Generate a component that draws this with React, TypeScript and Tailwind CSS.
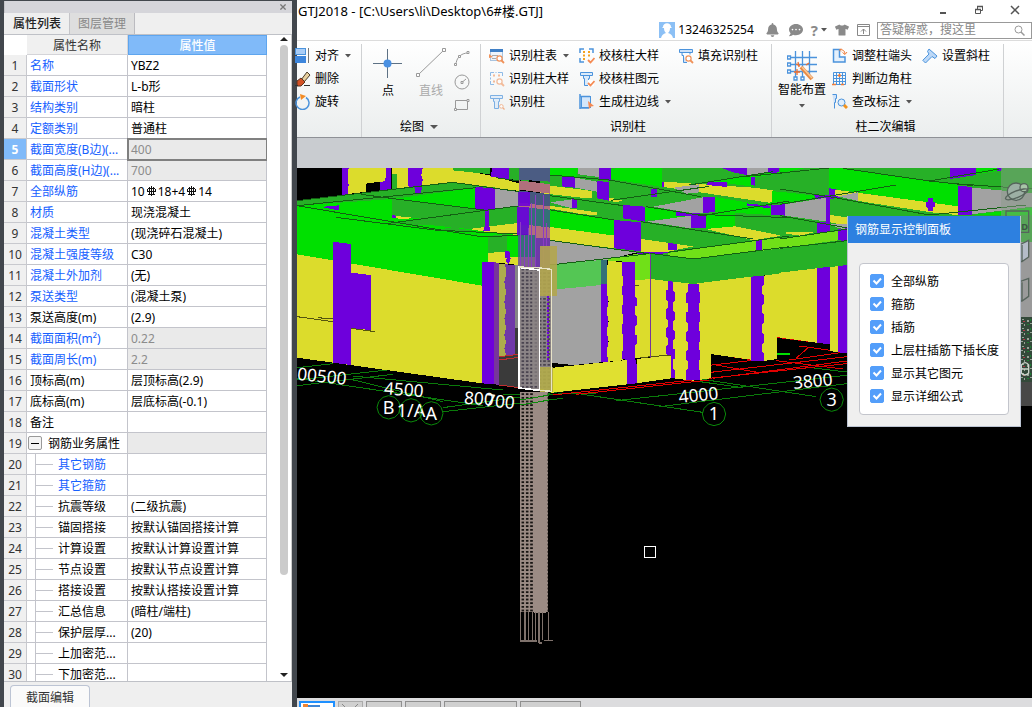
import React, { useState } from "react";
import { FaBell, FaCommentDots, FaTshirt } from "react-icons/fa";

interface PropertyRow {
  name: string;
  value?: React.ReactNode;
  blue?: boolean;
  disabled?: boolean;
  child?: boolean;
  group?: boolean;
  selected?: boolean;
}

// Rebar grade mark used between count and diameter
const Rebar = () => (
  <svg className="mx-px inline h-[11px] w-[11px] align-[-1px]" viewBox="0 0 11 11" fill="none" stroke="#111" shapeRendering="crispEdges">
    <path d="M5.500 0v10M3.500 1v7M7.500 1v7M2 8.500h7M1 5.500h9M2 2.500h7M1.500 3v3M9.500 3v3" />
  </svg>
);

const ROWS: PropertyRow[] = [
  { name: "名称", value: "YBZ2", blue: true },
  { name: "截面形状", value: "L-b形", blue: true },
  { name: "结构类别", value: "暗柱", blue: true },
  { name: "定额类别", value: "普通柱", blue: true },
  { name: "截面宽度(B边)(...", value: "400", blue: true, disabled: true, selected: true },
  { name: "截面高度(H边)(...", value: "700", blue: true, disabled: true },
  { name: "全部纵筋", value: <>10<Rebar />18+4<Rebar />14</>, blue: true },
  { name: "材质", value: "现浇混凝土", blue: true },
  { name: "混凝土类型", value: "(现浇碎石混凝土)", blue: true },
  { name: "混凝土强度等级", value: "C30", blue: true },
  { name: "混凝土外加剂", value: "(无)", blue: true },
  { name: "泵送类型", value: "(混凝土泵)", blue: true },
  { name: "泵送高度(m)", value: "(2.9)" },
  { name: "截面面积(m²)", value: "0.22", blue: true, disabled: true },
  { name: "截面周长(m)", value: "2.2", blue: true, disabled: true },
  { name: "顶标高(m)", value: "层顶标高(2.9)" },
  { name: "底标高(m)", value: "层底标高(-0.1)" },
  { name: "备注" },
  { name: "钢筋业务属性", group: true, disabled: true },
  { name: "其它钢筋", blue: true, child: true },
  { name: "其它箍筋", blue: true, child: true },
  { name: "抗震等级", value: "(二级抗震)", child: true },
  { name: "锚固搭接", value: "按默认锚固搭接计算", child: true },
  { name: "计算设置", value: "按默认计算设置计算", child: true },
  { name: "节点设置", value: "按默认节点设置计算", child: true },
  { name: "搭接设置", value: "按默认搭接设置计算", child: true },
  { name: "汇总信息", value: "(暗柱/端柱)", child: true },
  { name: "保护层厚...", value: "(20)", child: true },
  { name: "上加密范...", child: true },
  { name: "下加密范...", child: true },
];

const Caret = ({ className = "" }: { className?: string }) => (
  <svg className={`h-[4px] w-[6px] shrink-0 ${className}`} viewBox="0 0 6 4">
    <path d="M0 0h6L3 3.500z" fill="#555" />
  </svg>
);

/* ---------- Property panel ---------- */

const PropertyPanel = () => (
  <aside className="flex w-[297px] shrink-0 flex-col border-t border-r-[5px] border-l-4 border-[#42474d] bg-[#efefef]">
    <div className="flex h-3 shrink-0 items-center justify-end border-l border-[#c4c4c8] bg-[#d5d5da] pr-1.5">
      <button aria-label="关闭面板">
        <svg className="h-[6px] w-[6px]" viewBox="0 0 7 7" stroke="#777" strokeWidth="1.500">
          <path d="M.5 .5l6 6M6.500 .5l-6 6" />
        </svg>
      </button>
    </div>
    <div className="flex h-[22px] shrink-0 border-b border-[#bfc1c7] pl-px">
      <button className="w-[65px] border-r border-[#c4c4c8] font-medium text-[#222]">属性列表</button>
      <button className="w-[65px] border-r border-[#bbbbc0] bg-[#dedede] text-[#888]">图层管理</button>
    </div>

    <div className="flex min-h-0 flex-1 border-b border-[#bfc1c7] bg-white">
      <div className="min-w-0 flex-1 overflow-hidden">
        <table className="w-full table-fixed border-separate border-spacing-0">
          <thead>
            <tr>
              <th className="h-5 w-[23px] border-r border-white bg-white p-0" />
              <th className="w-[101px] border-r border-b border-[#d4d4d8] bg-[#f0f0f0] p-0 pt-0.5 leading-3 font-normal text-[#333]">
                属性名称
              </th>
              <th className="border border-[#5ea5ee] bg-[#80baf9] p-0 pt-0.5 leading-3 font-medium text-white">属性值</th>
            </tr>
          </thead>
          <tbody>
            {ROWS.map((row, i) => (
              <tr key={row.name}>
                <td
                  className={`h-[21px] border-r border-b border-[#c8c9ce] p-0 pt-0.5 text-center leading-3 ${
                    row.selected ? "bg-[#80baf9] font-bold text-white" : "bg-[#f0f0f0] text-[#333]"
                  }`}
                >
                  {i + 1}
                </td>
                <td className="border-r border-b border-[#c3c4cb] p-0 leading-3 whitespace-nowrap">
                  <div className={`flex h-5 items-center ${row.blue ? "text-[#1560ff]" : "text-black"}`}>
                    {row.child && (
                      <>
                        <span className="ml-2 h-5 w-px bg-[#c3c4cb]" />
                        <span className="mr-[5px] h-px w-[17px] bg-[#c3c4cb]" />
                      </>
                    )}
                    {row.group && (
                      <button aria-label="折叠" className="mr-1.5 ml-px flex h-[14px] w-[14px] items-center justify-center rounded-[2px] border border-[#999] bg-[#f4f4f4]">
                        <span className="h-px w-2 bg-black" />
                      </button>
                    )}
                    <span className={row.child || row.group ? "pt-0.5" : "pt-0.5 pl-[3px]"}>{row.name}</span>
                  </div>
                </td>
                <td
                  className={`border-r border-b border-[#c3c4cb] p-0 pt-0.5 pl-[3px] leading-3 whitespace-nowrap ${
                    row.disabled ? "bg-[#eaeaea] text-[#8c8c8c]" : "text-black"
                  } ${row.selected ? "outline-2 -outline-offset-1 outline-[#808080]" : ""}`}
                >
                  {row.value}
                </td>
              </tr>
            ))}
          </tbody>
        </table>
      </div>
      <div className="flex w-[25px] shrink-0 flex-col items-center gap-1 border-r border-[#ccc] pt-0.5 pb-1 pl-2.5">
        <svg className="h-[4px] w-2 shrink-0" viewBox="0 0 8 4"><path d="M0 4h8L4 0z" fill="#222" /></svg>
        <div className="flex min-h-0 w-2 flex-1 flex-col">
          <div className="h-[85%] rounded-full bg-[#cbcbcb]" />
        </div>
        <svg className="h-[4px] w-2 shrink-0" viewBox="0 0 8 4"><path d="M0 0h8L4 4z" fill="#222" /></svg>
      </div>
    </div>

    <div className="flex h-[25px] shrink-0 items-end pl-1.5">
      <button className="h-[22px] w-20 rounded-t-sm border border-b-0 border-[#bcc4d4] bg-[#fafafa] pt-0.5 text-[#333]">
        截面编辑
      </button>
    </div>
  </aside>
);

/* ---------- Ribbon icons ---------- */

const Icon = ({ children }: { children: React.ReactNode }) => (
  <svg className="h-4 w-4 shrink-0" viewBox="0 0 16 16" fill="none" stroke="#4b93dc">
    {children}
  </svg>
);

const lens = (
  <g stroke="#f0925a" strokeWidth="1.200">
    <circle cx="10.500" cy="10.500" r="2.600" fill="#fff" />
    <path d="M12.500 12.500l2.500 2.500" strokeWidth="1.800" />
  </g>
);
const check = <path d="M9 12l2.500 2.500L15.500 10" stroke="#f58a52" strokeWidth="1.800" />;
const columnShape = <path d="M1.500 1.500h12v3h-12zM4.500 4.500v3h1v7h4v-7h1v-3" fill="#dcebfa" />;

const icons = {
  align: <><rect x=".5" y=".5" width="10" height="6" fill="#a9cdf7" /><rect x="0" y="8" width="11" height="7" fill="#3e86dc" stroke="none" /><path d="M13.500 0v15" stroke="#777" /></>,
  erase: <><path d="M6 9L12 1l3 3-6 7z" fill="#e6cf9f" stroke="#4a3b28" /><path d="M2 10l4-3 4 4-4 4H2z" fill="#d45327" stroke="#5a3320" /><path d="M0 14.500h3M9 14.500h6" stroke="#333" /></>,
  rotate: <><path d="M5 3a6.500 6.500 0 1 0 6 .5" strokeWidth="1.500" /><path d="M5 0l6 2-5 4z" fill="#f28b25" stroke="none" /></>,
  tableFind: <><rect x="1.500" y="1.500" width="12" height="11" fill="#eef4fb" stroke="#aac4df" /><path d="M1 2.500h13" strokeWidth="3" stroke="#3f7fc6" /><path d="M3 7.500h6M3 10.500h4" stroke="#aaa" /><path d="M0 6l4 3-4 1z" fill="#f0925a" stroke="none" />{lens}</>,
  detailFind: <g opacity=".6"><path d="M5 1.500H1.500V5M9 1.500h4.500V5M5 13.500H1.500V10M1.500 6.500v2M6.500 1.500h1" /><path d="M4 4.500h2M9 4.500h2M4 10.500h2" stroke="#f0925a" strokeWidth="2" />{lens}</g>,
  column: <g opacity=".7">{columnShape}<g transform="translate(5 5) scale(.7)">{lens}</g></g>,
  checkDetail: <><path d="M5 1H1v4M10 1h4v4M5 14H1v-4" strokeWidth="1.500" /><path d="M4 4h2M9 4h2M4 7.500h2M4 11h2M9 7.500h2" stroke="#f5a11f" strokeWidth="2" />{check}</>,
  checkElement: <>{columnShape}<path d="M9 9h6v6H9z" fill="#fff" stroke="none" />{check}</>,
  edge: <><rect x="2.500" y="2.500" width="9" height="11" fill="#d3e6fa" /><path d="M1 0v15M1 14h9M1 2.500h10" strokeWidth="1.500" /><path d="M9 7l6 5-3 .5L10 15z" fill="#f58a52" stroke="none" /></>,
  fill: <><path d="M1.500 1.500h13v3h-13zM4 4.500v3h1.500v7H9M12 4.500v2" fill="#cfe2f8" />{lens}</>,
  adjust: <><path d="M7.500 1.500h-6v12.500h11.500v-5h-5.500z" fill="#e5f0fc" strokeWidth="1.500" /><path d="M8 1.500c3 0 5 1.500 5 4.500M10.500 4.500l2.500 2 2-2.500M9 .5L7.500 2 9 3.500" stroke="#ef7d3a" /></>,
  judge: <><path d="M1.500 1.500h12v12h-12zM1.500 4.500h12M1.500 7.500h12M1.500 10.500h12M4.500 1.500v12M7.500 1.500v12M10.500 1.500v12" /><path d="M6 4.500h3M7.500 3v3M0 13.500h4M9 13.500h3" stroke="#ef7d3a" strokeWidth="1.500" /></>,
  note: <><path d="M.5 .5h4v4h-1v4h-1v6" fill="#cfe2f8" /><circle cx="9.500" cy="8.500" r="3.500" fill="#dfeefd" /><path d="M12 11l3 3" stroke="#f2931e" strokeWidth="3" /></>,
  slant: <><path d="M7 1l8 7-2 2.500-3-2L3.500 15 .8 12.300 7 6 5.500 3.500z" fill="#bcd8f7" /></>,
};

interface ToolProps {
  icon: React.ReactNode;
  label: string;
  menu?: boolean;
}

const Tool = ({ icon, label, menu }: ToolProps) => (
  <button className="flex h-[23px] items-center gap-1 whitespace-nowrap">
    <Icon>{icon}</Icon>
    <span>{label}</span>
    {menu && <Caret className="ml-0.5" />}
  </button>
);

const GroupLabel = ({ children }: { children: React.ReactNode }) => (
  <div className="mt-auto flex h-5 items-center justify-center gap-1.5 pr-1">{children}</div>
);

const Ribbon = () => (
  <div className="flex h-[98px] shrink-0 border-t border-b border-t-[#dcdcdc] border-b-[#8e9196] bg-linear-to-b from-white to-[#ebeeee] pt-[3px]">
    <section className="-ml-0.5 flex w-[67px] shrink-0 flex-col border-r border-[#cfd1d3]">
      <Tool icon={icons.align} label="对齐" menu />
      <Tool icon={icons.erase} label="删除" />
      <Tool icon={icons.rotate} label="旋转" />
    </section>

    <section className="flex w-[119px] shrink-0 flex-col border-r border-[#cfd1d3]">
      <div className="flex pt-[3px]">
        <button className="flex w-[52px] flex-col items-center gap-1">
          <svg className="h-[32px] w-[30px]" viewBox="0 0 30 32" stroke="#5d7184">
            <path d="M14.500 2v29M0 16.500h29" />
            <circle cx="14.500" cy="16.500" r="4" fill="#4a90e2" stroke="none" />
          </svg>
          <span className="leading-4">点</span>
        </button>
        <button className="flex w-[34px] flex-col items-center gap-1 text-[#aaa]" disabled>
          <svg className="h-[32px] w-[30px]" viewBox="0 0 30 32" fill="#fff" stroke="#999">
            <path d="M2 28L28 3" />
            <path d="M.5 26.500h3v3h-3zM26.500 1.500h3v3h-3z" />
          </svg>
          <span className="leading-4">直线</span>
        </button>
        <div className="flex flex-1 flex-col items-center pr-1">
          <button aria-label="弧" className="h-[23px]" disabled>
            <svg className="h-4 w-4" viewBox="0 0 16 16" fill="#fff" stroke="#999">
              <path d="M2 14C2 7 7 2 14 2" fill="none" />
              <path d="M.5 12.500h2v2h-2zM4.500 4.500h2v2h-2zM13 .5h2v2h-2z" />
            </svg>
          </button>
          <button aria-label="圆" className="h-[23px]" disabled>
            <svg className="h-4 w-4" viewBox="0 0 16 16" fill="none" stroke="#999">
              <circle cx="8" cy="8" r="7" />
              <path d="M7 7.500h2v2H7zM9 7.500L12 5" />
            </svg>
          </button>
          <button aria-label="矩形" className="h-[23px]" disabled>
            <svg className="h-4 w-4" viewBox="0 0 16 16" fill="#fff" stroke="#999">
              <path d="M1.500 3.500h12v9h-12z" fill="none" />
              <path d="M.5 11.500h2v2h-2zM13 2.500h2v2h-2z" />
            </svg>
          </button>
        </div>
      </div>
      <GroupLabel>
        绘图
        <svg className="h-[4px] w-2" viewBox="0 0 8 4"><path d="M0 0h8L4 4z" fill="#555" /></svg>
      </GroupLabel>
    </section>

    <section className="flex w-[291px] shrink-0 flex-col border-r border-[#cfd1d3] pl-2">
      <div className="flex">
        <div className="w-[90px] shrink-0">
          <Tool icon={icons.tableFind} label="识别柱表" menu />
          <Tool icon={icons.detailFind} label="识别柱大样" />
          <Tool icon={icons.column} label="识别柱" />
        </div>
        <div className="w-[99px] shrink-0">
          <Tool icon={icons.checkDetail} label="校核柱大样" />
          <Tool icon={icons.checkElement} label="校核柱图元" />
          <Tool icon={icons.edge} label="生成柱边线" menu />
        </div>
        <div>
          <Tool icon={icons.fill} label="填充识别柱" />
        </div>
      </div>
      <GroupLabel>识别柱</GroupLabel>
    </section>

    <section className="flex w-[232px] shrink-0 flex-col border-r border-[#cfd1d3]">
      <div className="flex">
        <button className="flex w-[60px] shrink-0 flex-col items-center pt-1.5">
          <svg className="h-[32px] w-[30px]" viewBox="0 0 30 32" fill="#fff" stroke="#4b93dc" strokeWidth="1.300">
            <path d="M2 7.500h28M2 14.500h28M2 21.500h28M8.500 1v26M15.500 1v26M22.500 1v26" />
            <path d="M.5 6h3v3h-3zM.5 13h3v3h-3zM.5 20h3v3h-3zM7 27h3v3H7zM14 27h3v3h-3z" />
            <path d="M14 17l11 12" stroke="#e98b45" strokeWidth="4" />
            <path d="M15 17l10 11" stroke="#f7c99a" strokeWidth="1.500" />
            <path d="M9 14l4 2M11 12l1 5M19 15l3-2M7 22h6M10 19v6" stroke="#ef7030" />
          </svg>
          <span className="leading-4">智能布置</span>
          <Caret className="mt-1.5" />
        </button>
        <div className="w-[90px] shrink-0">
          <Tool icon={icons.adjust} label="调整柱端头" />
          <Tool icon={icons.judge} label="判断边角柱" />
          <Tool icon={icons.note} label="查改标注" menu />
        </div>
        <div>
          <Tool icon={icons.slant} label="设置斜柱" />
        </div>
      </div>
      <GroupLabel>柱二次编辑</GroupLabel>
    </section>
  </div>
);

/* ---------- Title bar ---------- */

const TitleBar = () => (
  <header className="shrink-0 bg-white">
    <div className="flex h-5 items-center justify-between pr-3 pl-px">
      <h1 className="pt-0.5 text-[13px] whitespace-nowrap">GTJ2018 - [C:\Users\li\Desktop\6#楼.GTJ]</h1>
      <div className="flex items-center gap-[26px]">
        <button aria-label="最小化">
          <svg className="h-[10px] w-[10px]" viewBox="0 0 10 10"><path d="M2 7h6v2H2z" fill="#555" /></svg>
        </button>
        <button aria-label="还原">
          <svg className="h-[10px] w-[10px]" viewBox="0 0 10 10" fill="#fff" stroke="#555">
            <path d="M3.500 1.500h5v4h-5z" /><path d="M1.500 4.500h5v4h-5z" /><path d="M3 1.500h6M1 4.500h6" strokeWidth="1.500" />
          </svg>
        </button>
        <button aria-label="关闭">
          <svg className="h-[10px] w-[10px]" viewBox="0 0 10 10" stroke="#555" strokeWidth="1.500"><path d="M1 1l8 8M9 1l-8 8" /></svg>
        </button>
      </div>
    </div>
    <div className="flex h-5 items-center justify-end">
      <svg className="mr-[3px] h-4 w-4" viewBox="0 0 16 16">
        <rect width="16" height="16" fill="#8cc0f5" />
        <path d="M4 5c0-5 8-5 8 0l1 1H3zM5 6h6c0 3-1 4-2 5 3 1 4 2 5 5H2c1-3 2-4 5-5-1-1-2-2-2-5z" fill="#fff" />
      </svg>
      <span className="mr-3">13246325254</span>
      <div className="flex items-center text-[#8a8a8a]">
        <button aria-label="通知" className="mr-2.5"><FaBell className="h-[14px] w-[13px]" /></button>
        <button aria-label="消息" className="mr-2"><FaCommentDots className="h-[14px] w-[14px]" /></button>
        <button aria-label="帮助" className="mr-2 flex items-center gap-[3px] text-[15px] leading-4 font-bold">?<Caret /></button>
        <button aria-label="皮肤" className="mr-2"><FaTshirt className="h-[14px] w-[14px]" /></button>
        <button aria-label="收起功能区" className="mr-[7px]">
          <svg className="h-[12px] w-[13px]" viewBox="0 0 13 12" fill="none" stroke="#888">
            <path d="M.5 .5h12v11H.5zM.5 2.500h12M6.500 10V5M4 7.500L6.500 5 9 7.500" />
          </svg>
        </button>
      </div>
      <label className="flex h-[17px] w-[155px] items-center border border-[#999] bg-white pr-1.5 pl-0.5">
        <input aria-label="搜索" placeholder="答疑解惑，搜这里" className="min-w-0 flex-1 leading-4 outline-none placeholder:text-[#888]" />
        <svg className="h-[11px] w-[11px]" viewBox="0 0 11 11" fill="none" stroke="#999">
          <circle cx="4.500" cy="4.500" r="3.500" /><path d="M7 7l3.500 3.500" strokeWidth="1.500" />
        </svg>
      </label>
    </div>
  </header>
);

/* ---------- 3D model ---------- */

const G = "#00e000";
const D = "#27b027";
const L = "#70e018";
const Y = "#dcdc2c";
const P = "#6e00dc";
const S = "#a2a2a2";

type Face = [string, string];

const LEFT_FACES: Face[] = [
  [Y, "155,9 270,9 270,50 252,75 155,87"],
  [P, "137,9 158,9 155,40 158,60 155,88 137,90"],
  ["#000", "210,56 252,50 252,75 210,83"],
  [P, "270,9 285,9 285,77 252,80 252,52 268,48"],
  [Y, "287,9 337,9 340,66 302,70 302,28 287,28"],
  [D, "287,28 302,28 302,72 287,74"],
  [Y, "375,9 470,9 575,30 670,55 670,78 470,52 375,66"],
  [D, "470,9 583,9 583,28 470,16"],
  [P, "588,9 640,9 640,42 585,36"],
  [D, "640,9 700,9 700,50 640,42"],
  [G, "3,120 540,68 700,85 700,302 576,290 558,362 3,268"],
  [D, "3,107 470,52 600,68 540,68 290,102 3,122"],
  [P, "337,9 380,9 376,30 380,45 375,88 358,88 358,68 337,64"],
  [P, "75,126 128,121 128,136"],
  [D, "287,102 568,137 385,162 287,152"],
  [Y, "300,153 350,158 330,163 300,160"],
  [P, "288,150 300,152 300,160 288,158"],
  [P, "538,66 598,70 598,132 568,136 538,130"],
  [S, "598,70 667,80 667,122 598,131"],
  [D, "270,176 665,123 665,176 520,192 400,180"],
  [Y, "520,192 665,174 665,210 585,203"],
  [D, "415,195 470,187 545,200 500,205"],
  [P, "567,136 579,136 579,182 584,198 562,198 567,180"],
  [G, "415,196 560,215 700,205 632,208"],
  [D, "576,213 632,207 632,260 576,265"],
  [Y, "576,264 627,260 640,275 668,275 668,300 576,290"],
  [P, "627,258 641,260 641,276 645,280 637,298 630,290 632,280 627,278"],
  [Y, "3,268 558,362 558,655 3,578"],
  [P, "110,230 165,237 165,600 110,593"],
  [P, "165,323 224,330 224,495 165,490"],
  [P, "558,292 595,292 595,658 558,655"],
  ["#77369a", "595,292 610,294 610,660 595,658"],
  ["#adad4c", "610,296 632,298 632,572 610,575"],
  ["#7038a8", "628,298 660,300 660,570 630,572 625,550 630,530 625,510 630,490 625,460 630,440 625,410 630,380 625,350 630,330"],
  ["#3a3a3a", "610,575 668,568 668,668 610,660"],
  ["#858585", "658,300 668,302 668,490 658,490"],
  ["#3a3a3a", "658,490 668,490 668,570 658,570"],
];

const MID_FACES: Face[] = [
  [D, "0,9 750,9 750,230 460,282 0,230"],
  [G, "30,9 115,9 110,36 30,30"],
  [S, "115,9 177,9 177,36 115,28"],
  [P, "65,32 105,38 105,68 65,64"],
  [S, "105,38 172,50 172,80 105,68"],
  [P, "177,9 212,9 212,47 177,45"],
  [P, "172,47 207,52 207,107 172,100"],
  [G, "212,12 240,9 367,9 367,66 212,42"],
  [Y, "0,58 157,78 157,98 125,98 0,84"],
  [P, "333,72 350,72 350,95 333,95"],
  [P, "365,50 372,50 372,66 365,66"],
  [P, "545,9 620,9 620,30 580,22"],
  [S, "620,9 685,9 685,22 620,30"],
  [P, "685,9 718,9 718,22 685,24"],
  [G, "520,50 690,24 750,20 640,38 640,65 560,55"],
  [P, "633,36 645,36 645,62 633,60"],
  [Y, "372,50 640,68 700,76 700,115 480,82 372,66"],
  [P, "500,50 560,50 560,66 500,60"],
  [S, "400,68 478,58 478,82 440,86"],
  [G, "697,78 750,86 750,115 680,116 697,110"],
  [S, "30,112 97,103 95,130"],
  [P, "95,102 112,103 110,130 95,130"],
  [Y, "0,118 170,142 170,150 130,148 0,126"],
  [Y, "207,98 250,105 230,112 207,107"],
  [P, "250,120 315,125 315,170 248,160"],
  [G, "315,127 485,150 400,160 315,167"],
  [S, "340,125 488,97 488,145 440,142"],
  [P, "488,95 525,97 525,140 488,145"],
  [G, "525,96 695,124 695,150 525,140"],
  [P, "620,115 690,122 692,130 620,122"],
  [P, "692,120 735,118 735,152 692,150"],
  [S, "735,117 750,115 750,156 735,152"],
  [P, "408,142 490,146 453,155 408,152"],
  [S, "320,170 453,152 453,190"],
  [P, "453,150 497,148 497,190 453,190"],
  [G, "497,148 585,136 585,186 497,192"],
  [Y, "497,192 585,184 725,212 640,226"],
  [G, "0,130 225,165 225,212 0,182"],
  [Y, "0,182 225,212 225,250 0,222"],
  [P, "222,165 303,172 303,259 222,250"],
  [Y, "303,222 460,244 370,263 303,262"],
  [P, "383,233 410,237 410,256 383,256"],
  [S, "0,223 290,262 200,285 0,303"],
  [P, "290,260 385,262 350,270 290,266"],
  [L, "383,264 650,227 750,212 750,247 460,282 383,272"],
  [P, "648,228 666,225 666,257 648,259"],
  [L, "205,280 290,267 332,266 332,342 285,346 285,292 205,287"],
  [D, "332,265 460,282 750,247 750,322 460,357 332,342"],
  ["#54c654", "30,300 183,285 183,360 30,378"],
  [S, "0,378 183,360 183,592 100,600 0,590"],
  ["#357078", "183,285 200,285 200,357 183,360"],
  [P, "183,358 204,355 204,592 183,592"],
  [Y, "203,287 250,292 250,586 205,590 200,560 206,530 200,500 206,470 200,440 206,410 200,380"],
  [Y, "285,346 332,342 460,357 512,350 512,640 460,647 400,640 400,585 390,570 285,580"],
  [P, "246,290 285,292 285,395 290,398 290,422 285,425 285,450 290,453 290,480 285,483 285,508 290,511 290,538 285,541 285,580 290,600 290,655 262,658 262,585 246,582 246,560 250,555 250,510 246,506 246,480 250,476 250,450 246,446 246,422 250,418 250,393 246,390 246,365 250,362 250,335 246,332"],
  ["#e0e030", "0,612 262,585 262,658 38,683 0,680"],
  ["#e0e030", "290,582 393,570 393,640 290,655"],
  [P, "384,348 399,350 399,378 404,382 404,408 399,411 399,436 404,440 404,466 399,470 399,495 404,499 404,522 399,526 399,550 404,553 404,582 395,582 390,570 378,568 378,545 383,540 383,520 378,515 378,490 383,485 383,465 378,460 378,434 383,430 383,408 378,404 378,377 384,374"],
  [P, "394,583 399,583 399,612 404,615 404,640 394,640"],
  [P, "443,357 477,357 477,380 481,384 481,412 477,415 477,440 481,443 481,470 477,474 477,498 481,502 481,528 477,532 477,555 481,558 481,584 477,588 477,615 481,618 481,645 438,645 438,615 443,612 443,588 438,584 438,558 443,555 443,532 438,528 438,502 443,498 443,474 438,470 438,443 443,440 443,415 438,412 438,384 443,380"],
  [Y, "512,350 632,335 632,584 512,567"],
  [P, "632,335 672,332 672,358 667,362 667,388 672,392 672,416 667,420 667,445 672,450 672,474 667,478 667,504 672,508 672,532 667,536 667,560 672,564 672,588 632,588"],
  [Y, "672,332 712,326 712,582 672,588 672,564 667,560 667,536 672,532 672,508 667,504 667,478 672,474 672,450 667,445 667,420 672,416 672,392 667,388 667,362 672,358"],
  [Y, "712,326 750,322 750,522 712,515"],
];

const RIGHT_FACES: Face[] = [
  [D, "0,9 756,9 756,230 202,230 0,250"],
  [G, "0,9 75,9 0,24"],
  [G, "0,80 105,92 105,102 0,118"],
  [P, "0,118 15,118 15,152 0,150"],
  [P, "103,90 180,92 180,100 105,102"],
  [S, "15,118 140,98 140,170 15,152"],
  [P, "138,98 150,98 150,175 138,172"],
  [G, "148,9 190,9 450,47 535,60 535,125 148,70"],
  [P, "147,70 168,72 165,95 147,92"],
  [Y, "165,74 535,124 535,150 480,146 235,108 165,92"],
  [S, "172,94 235,82 235,108"],
  [P, "443,98 458,98 458,110 465,112 465,126 458,128 458,138 443,138 443,128 438,126 438,112 443,110"],
  [P, "510,9 588,9 588,30 510,42"],
  [G, "588,9 655,9 650,18 588,28"],
  [P, "652,9 665,9 665,16 652,18"],
  [D, "190,9 510,9 510,40 450,48"],
  [P, "535,62 575,66 575,150 535,150"],
  [S, "575,68 756,85 756,125 575,148"],
  [G, "575,150 756,128 756,150"],
  [Y, "150,150 202,157 202,182 150,172"],
  [S, "150,178 202,178 202,192 175,190"],
  [Y, "0,203 110,200 60,212"],
  [P, "110,170 150,172 150,200 110,205"],
  [L, "0,222 175,198 175,226 0,250"],
  [P, "175,192 202,190 202,228 175,226"],
  [D, "0,252 202,227 202,300 0,324"],
  [Y, "0,323 110,310 110,533 0,518"],
  [P, "110,308 150,307 150,538 110,533"],
  [Y, "150,307 175,303 175,562 150,558"],
  [P, "175,303 202,300 202,565 175,562"],
];

const Faces = ({ list }: { list: Face[] }) => (
  <>
    {list.map(([fill, points], i) => (
      <polygon key={i} fill={fill} points={points} />
    ))}
  </>
);

// Axis bubbles are drawn by the engine as low-poly circles
const AxisBubble = ({ x, y, label }: { x: number; y: number; label: string }) => {
  const points = Array.from({ length: 12 }, (_, i) => {
    const a = (i * Math.PI) / 6;
    return `${Math.round(x + 35 * Math.cos(a))},${Math.round(y + 35 * Math.sin(a))}`;
  }).join(" ");

  return (
    <g>
      <polygon points={points} fill="none" stroke="#0a8a0a" strokeWidth="3" />
      <text x={x} y={y + 19} textAnchor="middle" fontSize="54">{label}</text>
    </g>
  );
};

const Model = () => (
  <svg className="block h-full w-full" viewBox="3 9 2205 1590" preserveAspectRatio="xMinYMin slice" shapeRendering="crispEdges" fontFamily="'Noto Sans', sans-serif">
    <defs>
      <pattern id="mesh" x="674" width="13" height="11" patternUnits="userSpaceOnUse">
        <rect width="13" height="11" fill="#9b8b84" />
        <rect x="2" y="3" width="9" height="4" fill="#171412" />
      </pattern>
      <pattern id="meshDim" x="674" width="13" height="11" patternUnits="userSpaceOnUse">
        <rect width="13" height="11" fill="#8b8486" />
        <rect x="2" y="3" width="9" height="4" fill="#4a4450" />
      </pattern>
      <pattern id="foliage" width="30" height="27" patternUnits="userSpaceOnUse">
        <rect width="30" height="27" fill="#33493a" />
        <path d="M3 6h6v6H3zM18 3h6v3h-6zM12 15h9v3h-9zM24 18h3v6h-3z" fill="#98a498" />
        <path d="M12 3h3v6h-3zM3 18h6v3H3z" fill="#1a8030" />
        <path d="M21 9h6v3h-6z" fill="#b03848" />
      </pattern>
    </defs>
    <rect x="0" y="0" width="2300" height="1700" fill="#000" />

    {/* Axis grid behind the building */}
    <g stroke="#0a7a0a" strokeWidth="3" fill="none">
      <path d="M3 608L110 596M3 645L300 612M3 662L290 628M170 633L620 675M160 642L440 710M3 640L560 722M440 728L900 665M440 740L800 700M620 690L900 685" />
      <path d="M840 685L1220 742M1090 725L1660 655M960 707L1480 650M1200 640L1560 695M1212 650L1340 668M1520 605L1660 622M1480 650L1660 630" />
    </g>
    <g stroke="#e00000" strokeWidth="3">
      <path d="M770 690L1660 595M840 688L1240 645M1244 565L1372 585M1250 640L1653 588M1244 622L1653 575M1232 602L1440 578M1260 600L1390 623M1440 587L1640 612M1444 517L1545 530M1510 543L1653 563M1480 585L1653 560M1540 545L1500 580" />
    </g>
    <path d="M1444 568L1482 566" stroke={G} strokeWidth="5" />

    <Faces list={LEFT_FACES} />
    <g transform="translate(732 0)"><Faces list={MID_FACES} /></g>
    <g transform="translate(1452 0)"><Faces list={RIGHT_FACES} /></g>

    {/* Beam edges */}
    <g stroke="#136013" strokeWidth="3" fill="none">
      <path d="M3 107L470 52L670 80M3 122L560 216L717 208M195 88L285 100L565 135M120 157L415 195L665 207M3 122L540 68M270 176L665 123M600 38L670 48" />
      <path d="M732 130L955 165M732 88L982 122M762 30L940 45L1215 95M944 106L1240 64M1035 170L1372 222M1050 125L1220 152L1480 108M1062 265L1192 282L1480 245M1115 262L1480 213M1200 148L1480 158M1180 60L1430 20M1340 35L1480 22M732 222L1050 265M762 300L1060 266" />
      <path d="M1452 24L1600 9M1452 72L1600 95M1452 118L1800 60M1452 152L1660 190M1640 10L1900 48L2030 62M1900 48L2110 12M1600 95L1900 150M1900 150L2190 120M1452 250L1654 227M1452 222L1654 192M1960 55L2208 72" />
    </g>
    <g stroke="#55550f" strokeWidth="3" fill="none">
      <path d="M3 455L110 470M65 458L110 462M165 490L238 500M1032 578L1125 570M1018 362h12" />
      <path d="M1063 266V578" stroke="#77369a" />
      <path d="M610 575L668 568M610 585L668 577M610 660L668 668" stroke="#c03030" />
    </g>

    {/* Highlighted column */}
    <g>
      <path d="M669 9h94v41l-94-6z" fill="#4b5c83" />
      <path d="M669 46l94 12v28l-94-12z" fill="#b0707c" />
      <path d="M669 76l94 12v46l-94-8z" fill="#45587e" />
      <path d="M665 122l98 12v56l-98-12z" fill="#357078" />
      <path d="M669 112l94 12v10l-94-8z" fill="#b0707c" />
      <path d="M700 180l63 8v37l-63-8z" fill="#b0707c" />
      <path d="M665 210h52v70h-52z" fill="#357078" />
      <path d="M665 275h52v34h-52z" fill="#7a6288" />
      <path d="M717 220h46v90h-46z" fill="#6d3aa8" />
      <path d="M667 80h34v42h-34zM663 125h37v86h-37z" fill={P} opacity=".9" />
      <path d="M673 170v132M685 210v95M696 190v120M706 115v190M718 90v215M742 90v215M750 175v70" stroke="#8d3bc4" strokeWidth="3" />
      <path d="M668 305l98 8v362l-98-7z" fill="url(#meshDim)" />
      <path d="M732 243h50v149h-50z" fill="#b3a64e" opacity=".9" />
      <path d="M732 607h38v73h-38z" fill="#b3ac4a" opacity=".9" />
      <path d="M708 320h20v340h-20z" fill="#8b8484" opacity=".7" />
      <path d="M756 392v195" stroke={P} strokeWidth="5" strokeDasharray="6 5" />
      <path d="M668 307l62 8v361l-62-7z" stroke="#fff" strokeWidth="5" fill="none" />
      <path d="M670 306l56 2 40 5v366l-36-3" stroke="#e8e4c8" strokeWidth="4" fill="none" />
    </g>

    {/* Rebar cage under the slab */}
    <rect x="673" y="681" width="84" height="660" fill="url(#mesh)" />
    <rect x="713" y="681" width="36" height="664" fill="#9b8b84" />
    <path d="M674 1341v87M687 1341v87M698 1341v84M709 1341v87M718 1341v84M729 1341v94M740 1341v84M757 1341v87M672 1428h50M728 1434h10M744 1426h26" stroke="#7f726c" strokeWidth="4" fill="none" />
    <path d="M673 720L760 705M673 705L760 690" stroke="#0a8a0a" strokeWidth="3" />

    <g fill="#fff" fontSize="52" shapeRendering="auto">
      <text x="2" y="644" transform="rotate(6 2 644)">00500</text>
      <text x="263" y="688" transform="rotate(4 263 688)">4500</text>
      <text x="503" y="716" transform="rotate(4 503 716)">800</text>
      <text x="566" y="723" transform="rotate(6 566 723)">700</text>
      <text x="1150" y="714" transform="rotate(-6 1150 714)">4000</text>
      <text x="1493" y="672" transform="rotate(-6 1493 672)">3800</text>
      <AxisBubble x={278} y={727} label="B" />
      <AxisBubble x={345} y={736} label="1/A" />
      <AxisBubble x={406} y={745} label="A" />
      <AxisBubble x={1254} y={747} label="1" />
      <AxisBubble x={1607} y={704} label="3" />
    </g>

    {/* Pick cursor */}
    <rect x="1046" y="1145" width="33" height="33" fill="none" stroke="#fff" strokeWidth="3" />

    {/* View navigation strip */}
    <rect x="2115" y="230" width="100" height="225" fill="#9a9a9a" />
    <rect x="2115" y="455" width="100" height="195" fill="url(#foliage)" />
    <rect x="2115" y="650" width="100" height="72" fill="#484848" />
    <rect x="2115" y="9" width="100" height="222" fill="#8a9a8a" opacity=".5" />
    <g stroke="#56645c" strokeWidth="4" fill="none" shapeRendering="auto">
      <circle cx="2160" cy="80" r="26" fill="#9cb0a4" />
      <circle cx="2184" cy="68" r="12" fill="#a8c4a8" />
      <ellipse cx="2162" cy="88" rx="36" ry="10" transform="rotate(-22 2162 88)" />
      <path d="M2130 138h68v64h-68z" />
      <path d="M2170 240l28-14v50l-20 14h-20v-50zM2178 240v50" fill="#b4bcc8" />
      <path d="M2165 352l33-12v54l-20 14h-20v-56zM2178 352v56" />
      <path d="M2176 600q12-14 22 0v24q-12 12-22 0zM2176 612h22" stroke="#ccd4cc" />
    </g>
    <text x="2176" y="194" fontSize="28" fontWeight="bold" fill="#3c5844">D</text>
  </svg>
);

/* ---------- Rebar display dialog ---------- */

const OPTIONS = ["全部纵筋", "箍筋", "插筋", "上层柱插筋下插长度", "显示其它图元", "显示详细公式"];

const RebarPanel = () => {
  const [checked, setChecked] = useState<boolean[]>(OPTIONS.map(() => true));

  const toggle = (index: number) => {
    setChecked((prev) => prev.map((v, i) => (i === index ? !v : v)));
  };

  return (
    <div className="absolute top-12 right-[11px] w-[174px] border border-t-0 border-[#bcc4d2] bg-[#efefef]">
      <h2 className="flex h-[27px] items-center bg-[#2d80e0] pl-[7px] text-white">钢筋显示控制面板</h2>
      <div className="mt-5 mr-[11px] mb-[11px] ml-[11px] rounded-sm border border-[#c3c5cc] bg-white py-1.5 pl-2.5">
        {OPTIONS.map((label, i) => (
          <label key={label} className="flex h-[23px] items-center gap-[7px] whitespace-nowrap">
            <span className="relative mb-px flex h-[14px] w-[14px] shrink-0">
              <input
                type="checkbox"
                checked={checked[i]}
                onChange={() => toggle(i)}
                className="peer h-[14px] w-[14px] appearance-none rounded-[2px] border border-[#539efa] bg-white checked:bg-[#539efa]"
              />
              <svg className="pointer-events-none absolute inset-0 hidden peer-checked:block" viewBox="0 0 14 14" fill="none" stroke="#fff" strokeWidth="2">
                <path d="M3.500 6.500l3 3 4.500-5" />
              </svg>
            </span>
            {label}
          </label>
        ))}
      </div>
    </div>
  );
};

const StatusTabs = () => (
  <footer className="flex h-[9px] shrink-0 items-end gap-[3px] overflow-hidden bg-[#dcdcde] pl-0.5">
    <button aria-label="视图 1" className="h-1.5 w-9 border-2 border-b-0 border-[#1e90ff] bg-white px-0.5">
      <svg className="h-1 w-5" viewBox="0 0 20 4"><path d="M0 1h5v3H0z" fill="#ee8434" /><path d="M5 2h12v2H5z" fill="#3f86d4" /></svg>
    </button>
    <button aria-label="视图 2" className="h-1.5 w-[25px] border border-b-0 border-[#aaa] bg-[#d0d0d0] px-[3px]">
      <svg className="h-1 w-4" viewBox="0 0 16 4" stroke="#888"><path d="M0 1l3 3M16 1l-3 3" /></svg>
    </button>
    <button aria-label="视图 3" className="h-1.5 w-9 border border-b-0 border-[#8f8f8f] bg-[#d0d0d0]" />
    <button aria-label="视图 4" className="h-1.5 w-9 border border-b-0 border-[#8f8f8f] bg-[#d0d0d0]" />
    <button aria-label="视图 5" className="h-1.5 w-[73px] border border-b-0 border-[#8f8f8f] bg-[#d0d0d0]" />
    <button aria-label="视图 6" className="h-1.5 w-[61px] border border-b-0 border-[#8f8f8f] bg-[#d0d0d0]" />
  </footer>
);

const App: React.FC = () => {
  return (
    <div className="flex h-screen overflow-hidden bg-white font-['Noto_Sans','Noto_Sans_CJK_SC',sans-serif] text-[12px] leading-4 text-black">
      <PropertyPanel />
      <main className="flex min-w-0 flex-1 flex-col">
        <TitleBar />
        <Ribbon />
        <div className="h-[30px] shrink-0 bg-[#c9ccd0]" />
        <div className="relative min-h-0 flex-1 overflow-hidden bg-black">
          <Model />
          <RebarPanel />
        </div>
        <StatusTabs />
      </main>
    </div>
  );
};

export default App;
